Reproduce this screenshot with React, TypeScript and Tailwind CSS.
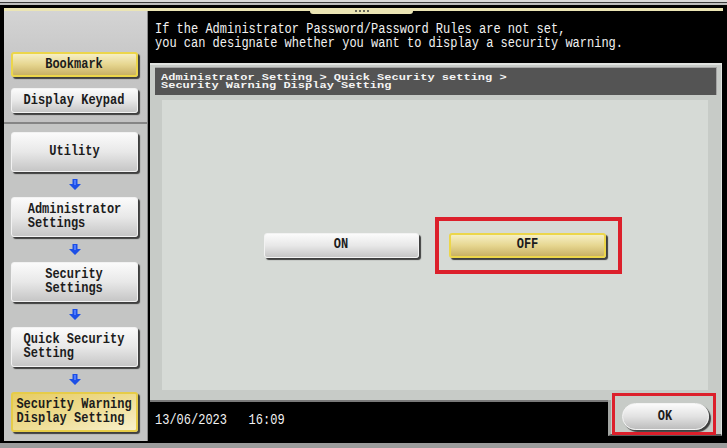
const grayBtn =
  "flex items-center justify-center rounded-[3px] border border-[#f2f2f2] bg-linear-to-b from-[#fbfbfb] via-[#e8e8e8] to-[#c6c6c6] shadow-[2px_2px_1px_#3e3e3e]";

const yellowBtn =
  "flex items-center justify-center rounded-[3px] border-2 border-[#ecd64a] bg-linear-to-b from-[#f6efc4] via-[#e6d690] to-[#c9b165] shadow-[2px_2px_1px_#3e3e3e]";

function Label({ lines }: { lines: string[] }) {
  return (
    <span className="inline-block scale-x-[0.8] whitespace-pre text-left text-[15px] font-bold leading-[14px] text-[#1c1c1c]">
      {lines.join("\n")}
    </span>
  );
}

function DownArrow() {
  return (
    <div className="ml-[7px] flex h-[25px] w-[127px] items-center justify-center">
      <svg width="12" height="11" viewBox="0 0 12 11">
        <path d="M3.5 0H8.5V5H12L6 11L0 5H3.5Z" fill="#1d4fe6" />
        <path d="M5 1H7V6H5Z" fill="#4f7bff" />
      </svg>
    </div>
  );
}

export default function App() {
  const steps = [
    { lines: ["Utility"], active: false },
    { lines: ["Administrator", "Settings"], active: false },
    { lines: ["Security", "Settings"], active: false },
    { lines: ["Quick Security", "Setting"], active: false },
    { lines: ["Security Warning", "Display Setting"], active: true },
  ];

  return (
    <div className="relative flex h-[448px] w-[727px] flex-col overflow-hidden bg-black font-['Liberation_Mono',monospace]">
      {/* TOP STRIPES */}
      <div className="h-[2px] bg-[#d9d9d9]" />
      <div className="h-[1px] bg-[#3a3a3a]" />
      <div className="h-[2px] bg-[#bdbdbd]" />
      <div className="h-[3px] bg-black" />
      <div className="mx-[4px] h-[3px] bg-[#ebe5b4]" />

      {/* handle tab */}
      <div className="absolute left-[310px] top-[8px] flex h-[6px] w-[103px] items-center justify-center gap-[2px] rounded-b-[3px] bg-[#ebe5b4]">
        <span className="h-[2px] w-[2px] bg-[#6a6a5a]" />
        <span className="h-[2px] w-[2px] bg-[#6a6a5a]" />
        <span className="h-[2px] w-[2px] bg-[#6a6a5a]" />
        <span className="h-[2px] w-[2px] bg-[#6a6a5a]" />
      </div>

      <div className="flex min-h-0 flex-1 pl-[4px]">
        {/* LEFT COLUMN */}
        <div className="flex w-[144px] flex-col border-r border-[#8a8a8a]">
          <div className="h-[113px] border-b-2 border-[#858585] bg-linear-to-b from-[#d4d4d4] via-[#c5c5c5] to-[#c2c2c2] pt-[41px]">
            <div className={`${yellowBtn} ml-[7px] h-[25px] w-[127px]`}>
              <Label lines={["Bookmark"]} />
            </div>
            <div className={`${grayBtn} ml-[7px] mt-[11px] h-[25px] w-[127px]`}>
              <Label lines={["Display Keypad"]} />
            </div>
          </div>

          <div className="flex-1 bg-[#c4c5c4] pt-[8px]">
            {steps.map((step, index) => (
              <div key={index}>
                {index > 0 && <DownArrow />}
                <div
                  className={
                    step.active
                      ? "ml-[7px] flex h-[40px] w-[127px] items-center justify-center rounded-[3px] border-2 border-[#e6cc48] bg-linear-to-br from-[#e6cc62] via-[#eedc90] to-[#f8f0cc] shadow-[2px_2px_1px_#3e3e3e]"
                      : `${grayBtn} ml-[7px] h-[40px] w-[127px]`
                  }
                >
                  <Label lines={step.lines} />
                </div>
              </div>
            ))}
          </div>
        </div>

        {/* RIGHT AREA */}
        <div className="ml-[2px] flex w-[572px] flex-col">
          <div className="h-[52px] pl-[5px] pt-[11px]">
            <div className="origin-left scale-x-[0.857] whitespace-pre text-[14px] leading-[14px] text-[#f2f2f2]">
              {"If the Administrator Password/Password Rules are not set,\nyou can designate whether you want to display a security warning."}
            </div>
          </div>

          {/* FRAME */}
          <div className="flex h-[337px] flex-col border-t-2 border-r border-[#e0e2e0] bg-[#c7cbc7]">
            <div className="ml-[5px] mr-[4px] mt-[2px] h-[28px] border-t border-r border-[#a4a4a4] bg-[#545454] pl-[6px] pt-[6px]">
              <div className="origin-top-left scale-y-[0.8] whitespace-pre text-[12px] font-bold leading-[9.5px] text-[#f4f4f4]">
                {"Administrator Setting > Quick Security setting >\nSecurity Warning Display Setting"}
              </div>
            </div>

            <div className="ml-[12px] mr-[13px] mt-[5px] flex h-[290px] items-center justify-center gap-[30px] bg-[#d6dad6]">
              <div className={`${grayBtn} h-[25px] w-[155px]`}>
                <Label lines={["ON"]} />
              </div>
              <div className="relative">
                <div className={`${yellowBtn} h-[25px] w-[157px]`}>
                  <Label lines={["OFF"]} />
                </div>
                <div className="pointer-events-none absolute -bottom-[16px] -left-[14px] -right-[16px] -top-[16px] border-[4px] border-[#dc1f2b]" />
              </div>
            </div>
          </div>

          {/* BOTTOM BAR */}
          <div className="flex h-[40px]">
            <div className="flex-1 border-t-2 border-[#7a7a7a] pl-[5px] pt-[12px]">
              <div className="origin-left scale-x-[0.8] whitespace-pre text-[15px] leading-[14px] text-[#f2f2f2]">
                {"13/06/2023   16:09"}
              </div>
            </div>
            <div className="h-[36px] w-[114px] border-b-2 border-l-[3px] border-r border-b-[#5a5a5a] border-l-[#a3a6a3] border-r-[#e0e2e0] bg-[#c7cbc7] pl-[11px] pt-[3px]">
              <div className="relative h-[27px] w-[87px]">
                <div className="flex h-[27px] w-[87px] items-center justify-center rounded-full border border-[#f4f4f4] bg-linear-to-b from-[#fbfbfb] via-[#e2e2e2] to-[#bdbdbd] shadow-[2px_2px_1px_#3e3e3e]">
                  <Label lines={["OK"]} />
                </div>
                <div className="pointer-events-none absolute -bottom-[5px] -left-[10px] -right-[7px] -top-[10px] border-[3px] border-[#dc1f2b]" />
              </div>
            </div>
          </div>
        </div>
      </div>

      {/* BOTTOM STRIPE */}
      <div className="h-[2px] bg-black" />
      <div className="h-[5px] bg-[#9c9c9c]" />
    </div>
  );
}
